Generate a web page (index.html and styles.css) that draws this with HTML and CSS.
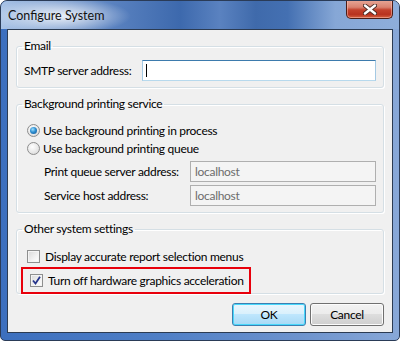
FILE: index.html
```
<!DOCTYPE html>
<html>
<head>
<meta charset="utf-8">
<link rel="stylesheet" href="styles.css">
</head>
<body>
<div class="window">
  <div class="titlebar">
    <span class="title">Configure System</span>
    <div class="close">
      <svg width="14" height="11" viewBox="0 0 14 11">
        <path d="M2 1.5 L12 9.5 M12 1.5 L2 9.5" stroke="#4a2a24" stroke-width="4.2" stroke-linecap="round"/>
        <path d="M2 1.5 L12 9.5 M12 1.5 L2 9.5" stroke="#ffffff" stroke-width="2.4" stroke-linecap="round"/>
      </svg>
    </div>
  </div>
  <div class="client">
    <fieldset class="group g-email">
      <legend>Email</legend>
      <div class="row">
        <span class="lbl lbl-smtp">SMTP server address:</span>
        <div class="input focused"><span class="caret"></span></div>
      </div>
    </fieldset>
    <fieldset class="group g-print">
      <legend>Background printing service</legend>
      <div class="opt opt-first"><span class="radio checked"></span><span>Use background printing in process</span></div>
      <div class="opt"><span class="radio"></span><span>Use background printing queue</span></div>
      <div class="row sub sub-first">
        <span class="lbl lbl-sub">Print queue server address:</span>
        <div class="input disabled">localhost</div>
      </div>
      <div class="row sub">
        <span class="lbl lbl-sub">Service host address:</span>
        <div class="input disabled">localhost</div>
      </div>
    </fieldset>
    <fieldset class="group g-other">
      <legend>Other system settings</legend>
      <div class="chk-row chk-first"><span class="check"></span><span>Display accurate report selection menus</span></div>
      <div class="highlight">
        <div class="chk-row"><span class="check checked">
          <svg width="9" height="9" viewBox="0 0 9 9"><path d="M1 4.5 L3.5 7.5 L8 0.8" fill="none" stroke="#26358c" stroke-width="1.8"/></svg>
        </span><span>Turn off hardware graphics acceleration</span></div>
      </div>
    </fieldset>
    <div class="buttons">
      <div class="btn default">OK</div>
      <div class="btn">Cancel</div>
    </div>
  </div>
</div>
</body>
</html>
```
FILE: styles.css
```
* { box-sizing: border-box; }
html, body { margin: 0; padding: 0; background: #ffffff; }
body {
  font-family: "Lato", "Noto Sans", sans-serif;
  font-size: 12px;
  line-height: 15px;
  letter-spacing: -0.3px;
  white-space: nowrap;
  color: #000;
}
.window {
  width: 400px;
  height: 341px;
  border-radius: 7px 7px 5px 5px;
  border: 1px solid #2a3b57;
  background: linear-gradient(to right, #3c6fbe 0%, #4f7fc6 40%, #6d93cd 75%, #88a8d8 100%);
  overflow: hidden;
  display: flex;
  flex-direction: column;
}
.titlebar {
  height: 28px;
  flex: none;
  display: flex;
  justify-content: space-between;
  align-items: flex-start;
  background:
    radial-gradient(ellipse 70px 18px at 60px 15px, rgba(255,255,255,0.85), rgba(255,255,255,0) 100%),
    linear-gradient(to right, #a9c3e6 0%, #7fa0d1 14%, #5a82c0 28%, #3d69ad 45%, #5a82c0 55%, #3f6aab 64%, #4470b2 72%, #86a7d6 84%, #8eaedb 100%);
}
.title {
  margin: 7px 0 0 7px;
  line-height: 16px;
  font-size: 12.5px;
  letter-spacing: 0;
  color: #111;
}
.close {
  width: 47px;
  height: 19px;
  margin: -1px 6px 0 0;
  border: 1px solid #4c1d16;
  border-top: none;
  border-radius: 0 0 5px 5px;
  background: linear-gradient(to bottom, #e8a898 0%, #d98270 40%, #c3412c 55%, #b8321f 80%, #d4613f 100%);
  box-shadow: inset 0 0 0 1px rgba(255,200,190,0.5);
  display: flex;
  align-items: center;
  justify-content: center;
}
.client {
  margin: 0 6px 7px 6px;
  flex: 1;
  background: #f0f0f0;
  border: 1px solid #2b3b52;
  display: flex;
  flex-direction: column;
}
.group {
  margin: 8px 8px 0 8px;
  padding: 0 7px 0 5px;
  border: 1px solid #d5dfe5;
  border-radius: 3px;
  box-shadow: inset 1px 1px 0 #ffffff, 1px 1px 0 #ffffff;
  min-width: 0;
}
.group legend {
  padding: 0 2px;
  line-height: 16px;
}
.row {
  display: flex;
  align-items: center;
}
.lbl { margin-left: 2px; }
.lbl-smtp { width: 118px; }
.g-email .row { margin-top: 6px; margin-bottom: 6px; }
.input {
  flex: 1;
  height: 21px;
  border: 1px solid #abadb3;
  padding-left: 4px;
  display: flex;
  align-items: center;
}
.input.focused {
  background: #ffffff;
  border-color: #3d7bad #a4c9e3 #b7d9ed #a4c9e3;
}
.caret {
  width: 1px;
  height: 13px;
  background: #000;
  margin-left: -1px;
}
.input.disabled {
  background: #f4f4f4;
  border-color: #afafaf;
  color: #6d6d6d;
}
.opt {
  display: flex;
  align-items: center;
  height: 18px;
  gap: 3px;
  padding-left: 5px;
}
.opt-first { margin-top: 9px; }
.radio {
  width: 13px;
  height: 13px;
  border-radius: 50%;
  border: 1px solid #8d8d8d;
  background: radial-gradient(circle at 40% 35%, #ffffff 0%, #e6e6e6 60%, #cfcfcf 100%);
  display: flex;
  align-items: center;
  justify-content: center;
}
.radio.checked::after {
  content: "";
  width: 7px;
  height: 7px;
  border-radius: 50%;
  background: radial-gradient(circle at 40% 35%, #9fe0ff 0%, #2d8ed0 45%, #12508e 100%);
}
.sub .lbl-sub { margin-left: 22px; width: 146px; }
.sub { margin-top: 3px; }
.sub-first { margin-top: 4px; }
.g-print .sub:last-child { margin-bottom: 6px; }
.chk-row {
  display: flex;
  align-items: center;
  height: 18px;
  gap: 5px;
  padding-left: 5px;
}
.chk-first { margin-top: 10px; }
.check {
  width: 13px;
  height: 13px;
  border: 1px solid #8e8f8f;
  background: linear-gradient(135deg, #d8d8d8 0%, #f2f2f2 60%, #ffffff 100%);
  box-shadow: inset 0 0 0 1px #f4f4f4;
  display: flex;
  align-items: center;
  justify-content: center;
}
.highlight {
  margin: 2px 0 -1px -1px;
  width: 230px;
  height: 27px;
  border: 2px solid #e8000b;
  padding: 2px 0 0 2px;
}
.buttons {
  display: flex;
  justify-content: flex-end;
  gap: 4px;
  margin: 9px 8px 0 0;
}
.btn {
  width: 74px;
  height: 23px;
  border: 1px solid #707070;
  border-radius: 3px;
  background: linear-gradient(to bottom, #f2f2f2 0%, #ebebeb 49%, #dddddd 50%, #cfcfcf 100%);
  box-shadow: inset 0 0 0 1px #fcfcfc;
  display: flex;
  align-items: center;
  justify-content: center;
}
.btn.default {
  border-color: #3c7fb1;
  background: linear-gradient(to bottom, #eaf6fd 0%, #d9f0fc 49%, #bee6fd 50%, #a7d9f5 100%);
  box-shadow: inset 0 0 0 1px #48d8fb;
}
```
